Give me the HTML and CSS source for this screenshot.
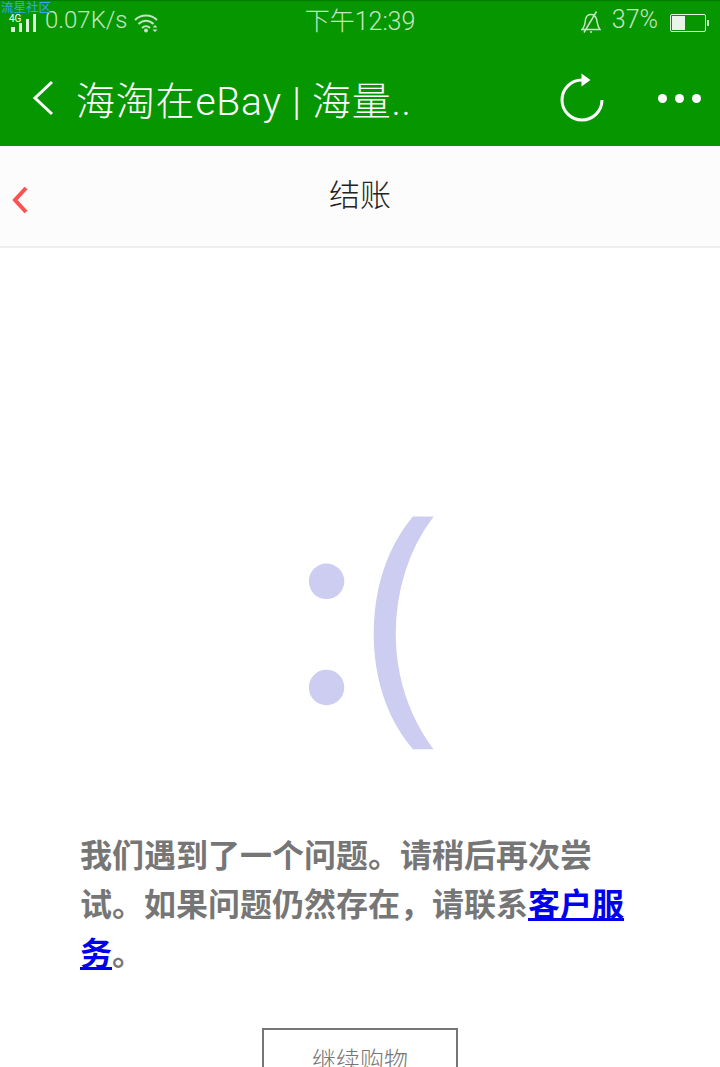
FILE: index.html
```html
<!DOCTYPE html>
<html lang="zh">

<head>
  <meta charset="UTF-8">
  <meta name="viewport" content="width=device-width, initial-scale=1.0">
  <title>结账</title>
  <link rel="stylesheet" href="styles.css">
</head>

<body>
  <div class="watermark">流星社区</div>

  <div class="statusBar">
    <div class="statusLeft">
      <div class="signalBox">
        <span class="netType">4G</span>
        <svg class="signal" width="26" height="18" viewBox="0 0 26 18">
          <rect x="0" y="13" width="4" height="5" />
          <rect x="8" y="9" width="3" height="9" />
          <rect x="15" y="5" width="3" height="13" />
          <rect x="22" y="0" width="3" height="18" />
        </svg>
      </div>
      <span class="speed">0.07K/s</span>
      <svg class="wifi" width="24" height="20" viewBox="0 0 24 20">
        <path d="M1 7C7 1 17 1 23 7M4.500 11C9 6.500 15 6.500 19.500 11M8 15C10.500 12.500 13.500 12.500 16 15" />
        <circle cx="12" cy="17.500" r="2" />
        <path class="wifiArrow" d="M18.500 14.500h5l-2.500-2.500zM18.500 16.500h5l-2.500 2.500z" />
      </svg>
    </div>
    <div class="statusTime">下午12:39</div>
    <div class="statusRight">
      <svg class="bell" width="20" height="22" viewBox="0 0 20 22">
        <path d="M1 18.500h18C16 15 16.500 11 15.500 8C14.700 5.500 12.500 3.500 10 3.500C7 3.500 5 5.500 4.500 8.500C4 12 4 15.500 1 18.500ZM15.500 .5L3 21.500M9 21h2" />
      </svg>
      <span class="percent">37%</span>
      <div class="battery">
        <div class="batteryLevel"></div>
      </div>
      <div class="batteryTip"></div>
    </div>
  </div>

  <div class="appBar">
    <svg class="appBack" width="22" height="36" viewBox="0 0 22 36">
      <path d="M20 2L3 18L20 34" />
    </svg>
    <div class="appTitle">海淘在eBay | 海量..</div>
    <svg class="refresh" width="46" height="50" viewBox="0 0 46 50">
      <path class="refreshArc" d="M22 7A20 20 0 1 0 42 27" />
      <path class="refreshHead" d="M21.500 .5L30.500 7L21.500 13.500Z" />
    </svg>
    <div class="dots">
      <span></span>
      <span></span>
      <span></span>
    </div>
  </div>

  <div class="subBar">
    <svg class="subBack" width="16" height="28" viewBox="0 0 16 28">
      <path d="M14 2L3 14L14 26" />
    </svg>
    <div class="subTitle">结账</div>
  </div>

  <div class="content">
    <div class="sadFace"><span class="sadEyes">:</span><span class="sadMouth">(</span></div>
    <p class="message">我们遇到了一个问题。请稍后再次尝试。如果问题仍然存在，请联系<a href="#">客户服务</a>。</p>
    <div class="btnRow">
      <button class="continueBtn">继续购物</button>
    </div>
  </div>
</body>

</html>
```

FILE: styles.css
```css
* {
  box-sizing: border-box;
}

html,
body {
  height: 1067px;
}

body {
  position: relative;
  margin: 0;
  overflow: hidden;
  background-color: #fff;
  font-family: "Noto Sans CJK SC", "Roboto", sans-serif;
}

.watermark {
  position: absolute;
  top: -1px;
  left: 1px;
  z-index: 2;
  font-size: 12.5px;
  line-height: 16px;
  color: #3ba8ee;
}

.statusBar {
  display: grid;
  grid-template-columns: 1fr auto 1fr;
  align-items: center;
  height: 36px;
  padding-bottom: 6px;
  border-top: 1px solid #047a00;
  background-color: #069600;
  color: #c4e5c2;
  font-family: "Roboto", "Noto Sans CJK SC", sans-serif;
  font-size: 25px;
  font-weight: 300;
}

.statusLeft,
.statusRight {
  display: flex;
  align-items: center;
}

.statusLeft {
  padding-left: 11px;
}

.statusRight {
  justify-content: flex-end;
  padding-right: 11px;
}

.statusTime,
.percent {
  padding-bottom: 2px;
}

.signalBox {
  position: relative;
  width: 26px;
  height: 18px;
  margin-top: 6px;
}

.signal {
  display: block;
  fill: #dff2de;
}

.netType {
  position: absolute;
  top: 0;
  left: -2px;
  font-size: 10px;
  line-height: 10px;
  font-weight: 400;
  color: #fff;
}

.speed {
  margin-left: 8px;
  font-size: 24px;
}

.wifi {
  margin-top: 6px;
  margin-left: 6px;
  fill: #c4e5c2;
}

.wifi path {
  fill: none;
  stroke: #c4e5c2;
  stroke-width: 2;
}

.wifi .wifiArrow {
  fill: #c4e5c2;
  stroke: none;
}

.bell {
  margin-top: 4px;
  margin-right: 11px;
}

.bell path {
  fill: none;
  stroke: #c4e5c2;
  stroke-width: 1.500;
}

.battery {
  width: 36px;
  height: 18px;
  margin-top: 5px;
  margin-left: 12px;
  padding: 1px;
  border: 1px solid #e3f3e2;
  border-radius: 2px;
}

.batteryLevel {
  width: 13px;
  height: 14px;
  background-color: #e9f5e8;
}

.batteryTip {
  width: 2px;
  height: 6px;
  margin-top: 5px;
  margin-left: 1px;
  background-color: #c4e5c2;
}

.appBar {
  display: flex;
  align-items: center;
  height: 110px;
  padding-top: 14px;
  background-color: #069600;
  color: #fff;
}

.appBack {
  flex: none;
  margin-left: 32px;
}

.appBack path {
  fill: none;
  stroke: #fff;
  stroke-width: 3;
}

.appTitle {
  flex: 1;
  margin-left: 22px;
  font-family: "Roboto", "Noto Sans CJK SC", sans-serif;
  font-size: 39px;
  font-weight: 300;
  letter-spacing: .8px;
  white-space: nowrap;
}

.refresh {
  flex: none;
}

.refreshArc {
  fill: none;
  stroke: #fff;
  stroke-width: 3;
}

.refreshHead {
  fill: #fff;
}

.dots {
  display: flex;
  gap: 8px;
  margin: 0 19px 0 52px;
}

.dots span {
  width: 9px;
  height: 9px;
  border-radius: 50%;
  background-color: #fff;
}

.subBar {
  position: relative;
  display: flex;
  align-items: center;
  justify-content: center;
  height: 102px;
  padding-bottom: 8px;
  border-bottom: 2px solid #eee;
  background-color: #fcfcfc;
}

.subBack {
  position: absolute;
  top: 40px;
  left: 12px;
}

.subBack path {
  fill: none;
  stroke: #ff5050;
  stroke-width: 4;
}

.subTitle {
  font-size: 31px;
  font-weight: 300;
  color: #222;
}

.content {
  padding: 0 80px;
}

.sadFace {
  margin-top: 196px;
  height: 300px;
  padding-left: 13px;
  line-height: 300px;
  text-align: center;
  color: #cccdf0;
}

.sadEyes {
  font-family: "Lato", sans-serif;
  font-size: 283px;
  vertical-align: 4px;
}

.sadMouth {
  margin-left: 1px;
  font-family: "Open Sans", sans-serif;
  font-size: 267px;
}

.message {
  margin: 85px 0 0;
  font-size: 32px;
  font-weight: 700;
  line-height: 49px;
  color: #767676;
}

.message a {
  color: #00e;
}

.btnRow {
  display: flex;
  justify-content: center;
  margin-top: 52px;
}

.continueBtn {
  width: 196px;
  height: 60px;
  padding: 0;
  border: 2px solid #767676;
  background-color: #fff;
  font-family: inherit;
  font-size: 24px;
  font-weight: 300;
  color: #767676;
}
```
